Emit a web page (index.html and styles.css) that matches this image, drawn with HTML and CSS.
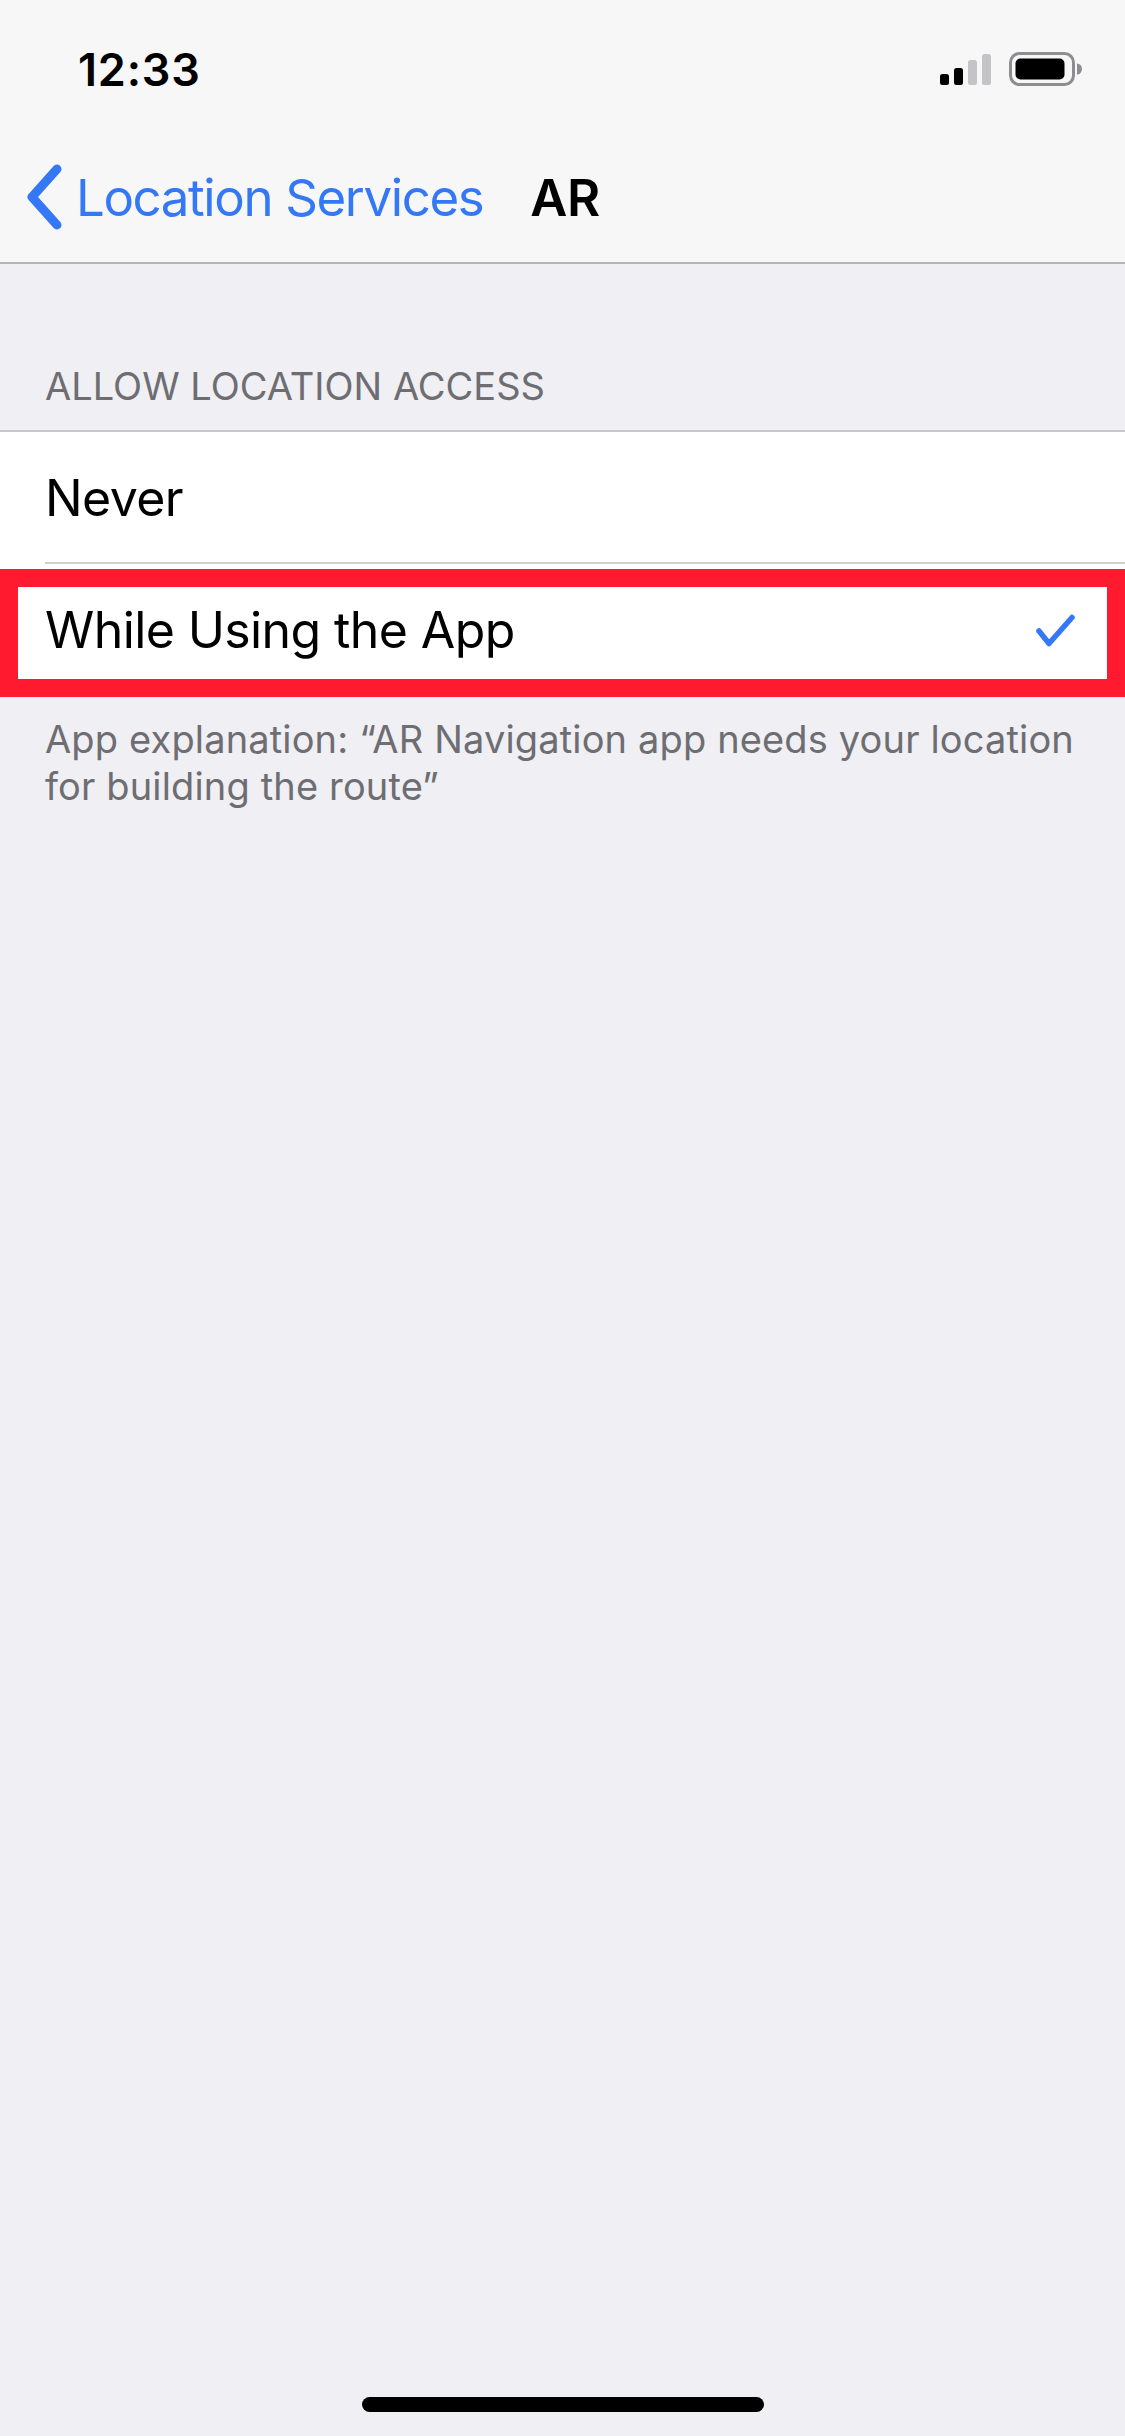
FILE: index.html
```html
<!DOCTYPE html>
<html lang="en">
<head>
<meta charset="utf-8">
<title>AR - Location Services</title>
<link rel="stylesheet" href="styles.css">
</head>
<body>
<div class="screen">
  <header class="top">
    <div class="statusbar">
      <span class="time">12:33</span>
      <div class="status-icons">
        <svg class="signal" width="51" height="31" viewBox="0 0 51 31">
          <rect x="0" y="20" width="9" height="11" rx="2.5" fill="#000"/>
          <rect x="14" y="14" width="9" height="17" rx="2.5" fill="#000"/>
          <rect x="28" y="6" width="9" height="25" rx="2.5" fill="#c4c4c7"/>
          <rect x="42" y="0" width="9" height="31" rx="2.5" fill="#c4c4c7"/>
        </svg>
        <svg class="battery" width="74" height="34" viewBox="0 0 74 34">
          <rect x="1.5" y="1.5" width="63" height="31" rx="9" fill="none" stroke="#8e8e92" stroke-width="3"/>
          <rect x="6.5" y="6.5" width="49" height="21" rx="5" fill="#000"/>
          <path d="M68 11.5 a5 5.5 0 0 1 0 11 z" fill="#8e8e92"/>
        </svg>
      </div>
    </div>
    <nav class="navbar">
      <a class="back">
        <svg class="chevron" width="44" height="68" viewBox="0 0 44 68">
          <polyline points="35,6 10,34 35,62" fill="none" stroke="#3478f6" stroke-width="9" stroke-linecap="round" stroke-linejoin="round"/>
        </svg>
        <span class="back-label">Location Services</span>
      </a>
      <span class="title">AR</span>
    </nav>
  </header>

  <main class="content">
    <div class="section-header">ALLOW LOCATION ACCESS</div>
    <ul class="list">
      <li class="row"><span class="row-label">Never</span></li>
      <li class="row selected">
        <span class="row-label">While Using the App</span>
        <svg class="check" width="41" height="33" viewBox="0 0 41 33">
          <polyline points="4,17 14,29.5 37,3.5" fill="none" stroke="#3478f6" stroke-width="5.5" stroke-linecap="round" stroke-linejoin="round"/>
        </svg>
        <span class="highlight"></span>
      </li>
    </ul>
    <p class="footer">App explanation: “AR Navigation app needs your location for building the route”</p>
  </main>

  <div class="home-indicator"></div>
</div>
</body>
</html>
```

FILE: styles.css
```css
* {
  box-sizing: border-box;
}

html, body {
  margin: 0;
  padding: 0;
}

body {
  background: #efeff4;
  font-family: Inter, "Noto Sans", "Liberation Sans", sans-serif;
  color: #000;
}

.screen {
  display: flex;
  flex-direction: column;
  min-height: 2436px;
}

.top {
  background: #f7f7f8;
  border-bottom: 2px solid #b4b4b8;
}

.statusbar {
  height: 132px;
  display: flex;
  align-items: center;
  justify-content: space-between;
  padding: 6px 42px 0 78px;
}

.time {
  font-size: 45px;
  font-weight: 600;
  letter-spacing: 0.8px;
}

.status-icons {
  display: flex;
  align-items: center;
  gap: 18px;
}

.signal {
  display: block;
}

.battery {
  display: block;
}

.navbar {
  height: 130px;
  display: flex;
  align-items: center;
  padding-left: 22px;
}

.back {
  display: flex;
  align-items: center;
  gap: 10px;
  color: #3478f6;
}

.chevron {
  display: block;
}

.back-label {
  font-size: 51px;
  letter-spacing: -1.4px;
}

.title {
  margin-left: 47px;
  font-size: 51px;
  font-weight: 600;
  letter-spacing: -0.4px;
}

.content {
  display: flex;
  flex-direction: column;
}

.section-header {
  padding: 100px 0 22px 45px;
  font-size: 38px;
  line-height: 44px;
  color: #6d6d72;
  letter-spacing: 0;
}

.list {
  list-style: none;
  margin: 0;
  padding: 0;
  background: #fff;
  border-top: 2px solid #c8c7cc;
}

.row {
  position: relative;
  height: 132px;
  display: flex;
  align-items: center;
  justify-content: space-between;
  padding: 0 49px 0 45px;
}

.row:first-child::after {
  content: "";
  position: absolute;
  left: 45px;
  right: 0;
  bottom: 0;
  height: 2px;
  background: #d0d0d4;
}

.row-label {
  font-size: 50px;
  letter-spacing: -0.6px;
}

.check {
  display: block;
}

.highlight {
  position: absolute;
  left: 0;
  right: 0;
  top: 5px;
  bottom: -1px;
  border: 18px solid #ff1a2f;
  pointer-events: none;
}

.footer {
  margin: 0;
  padding: 20px 30px 0 45px;
  font-size: 38px;
  line-height: 47px;
  color: #6d6d72;
  letter-spacing: 0.15px;
}

.home-indicator {
  margin: auto auto 24px;
  width: 402px;
  height: 15px;
  border-radius: 8px;
  background: #000;
}
```
